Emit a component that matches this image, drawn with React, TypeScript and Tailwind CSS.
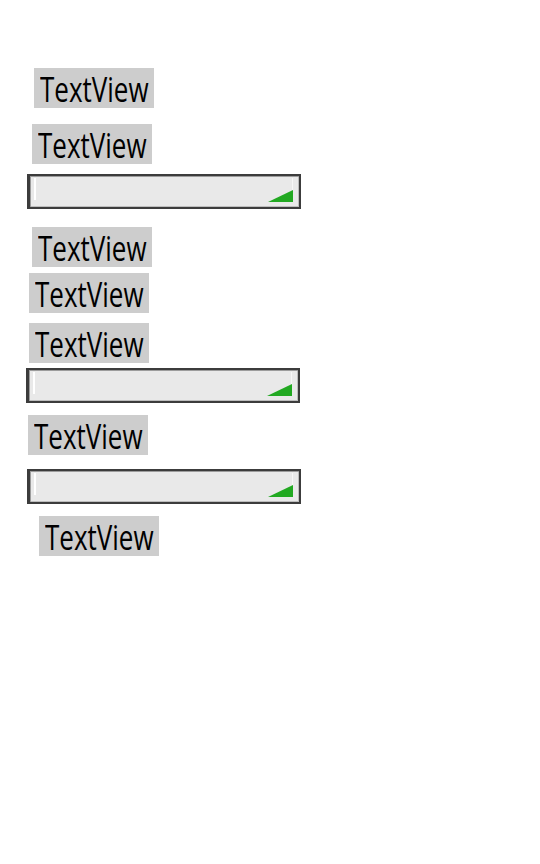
import React from "react";

function TextView({ ml, mt }: { ml: string; mt: string }) {
  return (
    <div className={`${ml} ${mt} h-[40px] w-[120px] bg-[#cdcdcd] shrink-0`}>
      <div
        className="pl-[6px] text-[26px] leading-[40px] text-black whitespace-nowrap origin-[0_18px] scale-y-[1.3]"
        style={{ fontFamily: '"Open Sans", "Noto Sans", sans-serif' }}
      >
        TextView
      </div>
    </div>
  );
}

function Spinner({ ml, mt }: { ml: string; mt: string }) {
  return (
    <div
      className={`${ml} ${mt} relative h-[35px] w-[274px] shrink-0 border-2 border-l-[3px] border-[#3c3c3c] bg-[#e9e9e9] shadow-[inset_1px_1px_0_#9c9c9c,inset_-1px_-1px_0_#bdbdbd]`}
    >
      <div className="absolute left-[4px] top-[2px] h-[22px] w-[2px] bg-white" />
      <div className="absolute right-[6px] top-[2px] h-[14px] w-[1px] bg-[#f7f7f7]" />
      <svg
        className="absolute right-[6px] bottom-[5px]"
        width="25"
        height="12"
        viewBox="0 0 25 12"
      >
        <polygon points="0,12 25,0 25,12" fill="#22a922" />
      </svg>
    </div>
  );
}

export default function App() {
  return (
    <div className="w-[540px] h-[864px] bg-white flex flex-col items-start pt-[68px]">
      <TextView ml="ml-[34px]" mt="mt-0" />
      <TextView ml="ml-[32px]" mt="mt-[16px]" />
      <Spinner ml="ml-[27px]" mt="mt-[10px]" />
      <TextView ml="ml-[32px]" mt="mt-[18px]" />
      <TextView ml="ml-[29px]" mt="mt-[6px]" />
      <TextView ml="ml-[29px]" mt="mt-[10px]" />
      <Spinner ml="ml-[26px]" mt="mt-[5px]" />
      <TextView ml="ml-[28px]" mt="mt-[12px]" />
      <Spinner ml="ml-[27px]" mt="mt-[14px]" />
      <TextView ml="ml-[39px]" mt="mt-[12px]" />
    </div>
  );
}
